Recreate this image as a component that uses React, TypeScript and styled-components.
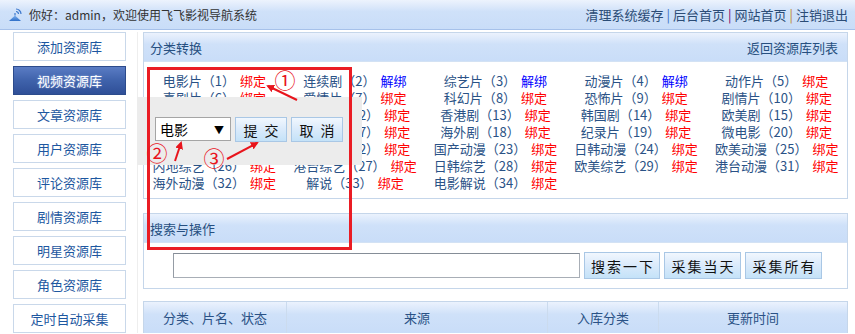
import React from "react";
import styled, { createGlobalStyle } from "styled-components";

const GlobalStyle = createGlobalStyle`
  html, body { margin: 0; padding: 0; background: #fff; }
  body { font-family: "Noto Sans CJK SC", "Noto Sans", sans-serif; }
  * { box-sizing: border-box; }
`;

const Page = styled.div`
  position: relative;
  width: 855px;
  height: 334px;
  overflow: hidden;
  background: #fff;
`;

const TopBar = styled.header`
  height: 30px;
  border-bottom: 1px solid #a6c1ea;
  background: linear-gradient(to bottom, #edf3fd 0%, #cfe1f9 40%, #c9ddf8 100%);
  display: flex;
  align-items: center;
  justify-content: space-between;
  padding: 0 7px 0 8px;
`;

const Greeting = styled.div`
  display: flex;
  align-items: center;
  gap: 7px;
  font-size: 12px;
  line-height: 16px;
  color: #333;
`;

const TopLinks = styled.nav`
  font-size: 13px;
  line-height: 16px;
  color: #2b4c76;
  white-space: nowrap;
`;

const Sep = styled.span<{ $c: string }>`
  color: ${(p) => p.$c};
  margin: 0 3px;
`;

const Body = styled.div`
  display: flex;
  padding-top: 2px;
`;

const Sidebar = styled.aside`
  width: 137px;
  padding-left: 13px;
  display: flex;
  flex-direction: column;
  gap: 5px;
`;

const SideButton = styled.div<{ $active?: boolean }>`
  width: 113px;
  height: 29px;
  display: flex;
  align-items: center;
  justify-content: center;
  font-size: 13px;
  border: 1px solid ${(p) => (p.$active ? "#2c4b8c" : "#c9d8ea")};
  background: ${(p) =>
    p.$active ? "linear-gradient(to bottom, #5a7cc4 0%, #3f62ab 50%, #2f4f97 100%)" : "#fff"};
  color: ${(p) => (p.$active ? "#fff" : "#1d57a0")};
  text-shadow: ${(p) => (p.$active ? "0 0 2px rgba(200,220,255,0.7)" : "none")};
`;

const Main = styled.main`
  width: 718px;
  border-left: 1px solid #eeeeee;
  padding: 0 7px 0 5px;
  display: flex;
  flex-direction: column;
`;

const Panel = styled.section<{ $mt?: number }>`
  width: 705px;
  border: 1px solid #c5d6ea;
  margin-top: ${(p) => p.$mt ?? 0}px;
  background: #fff;
`;

const PanelHeader = styled.div`
  height: 29px;
  border-bottom: 1px solid #d3e2f4;
  background: linear-gradient(to bottom, #ebf2fd 0%, #cfe1f9 40%, #c9ddf8 100%);
  display: flex;
  align-items: center;
  justify-content: space-between;
  padding: 0 9px 0 6px;
  font-size: 13px;
  color: #264f80;
`;

const CatGrid = styled.ul`
  list-style: none;
  margin: 0;
  padding: 10px 0 7px;
  display: grid;
  grid-template-columns: repeat(5, 1fr);
  font-size: 13px;
  line-height: 17px;
`;

const CatItem = styled.li`
  text-align: center;
  white-space: nowrap;
  color: #2a5286;
`;

const Action = styled.span<{ $unbind?: boolean }>`
  margin-left: 5px;
  color: ${(p) => (p.$unbind ? "#0000ff" : "#ff0000")};
`;

const SearchRow = styled.div`
  display: flex;
  align-items: center;
  gap: 4px;
  padding: 9px 0 9px 29px;
`;

const SearchInput = styled.input`
  width: 407px;
  height: 25px;
  border: 1px solid #a8aeb6;
  border-top-color: #858d97;
  border-left-color: #959ca5;
  outline: none;
  padding: 0 4px;
  font-size: 13px;
`;

const BlueButton = styled.button<{ $w: number; $h: number; $ls?: number }>`
  width: ${(p) => p.$w}px;
  height: ${(p) => p.$h}px;
  padding: 0;
  border: 1px solid #a9c7e5;
  background: linear-gradient(to bottom, #f1f7fe 0%, #dcebfb 45%, #c4e2f8 100%);
  font-family: "Noto Sans CJK SC", "Noto Sans", sans-serif;
  font-size: 14px;
  letter-spacing: ${(p) => p.$ls ?? 2}px;
  text-indent: ${(p) => p.$ls ?? 2}px;
  color: #111;
  cursor: pointer;
`;

const Table = styled.div`
  width: 705px;
  margin-top: 12px;
  border: 1px solid #c5d6ea;
  border-bottom: none;
  display: grid;
  grid-template-columns: 142px 261px 111px 1fr;
`;

const Th = styled.div<{ $first?: boolean }>`
  height: 31px;
  display: flex;
  align-items: center;
  justify-content: center;
  font-size: 13px;
  color: #2a5286;
  border-left: ${(p) => (p.$first ? "none" : "1px solid #cbdbee")};
  background: linear-gradient(to bottom, #ebf2fd 0%, #cfe1f9 40%, #c9ddf8 100%);
`;

/* ---- overlays ---- */

const Popup = styled.div`
  position: absolute;
  left: 137px;
  top: 97px;
  width: 225px;
  height: 68px;
  background: #ececec;
  display: flex;
  align-items: flex-start;
  gap: 4px;
  padding: 20px 0 0 18px;
`;

const SelectBox = styled.div`
  width: 76px;
  height: 24px;
  background: #fff;
  border: 1px solid #a5a5a5;
  display: flex;
  align-items: center;
  justify-content: space-between;
  padding: 0 6px 0 4px;
  font-size: 14px;
  color: #000;
`;

const Caret = styled.span`
  font-size: 10px;
  color: #000;
`;

const RedFrame = styled.div`
  position: absolute;
  left: 147px;
  top: 67px;
  width: 205px;
  height: 183px;
  border: 3px solid #ea1c24;
  pointer-events: none;
`;

const Marker = styled.span`
  position: absolute;
  transform: translate(-50%, -50%);
  font-family: "Noto Sans CJK SC", sans-serif;
  font-size: 21px;
  line-height: 1;
  color: #e8141c;
  pointer-events: none;
`;

const ArrowLayer = styled.svg`
  position: absolute;
  left: 0;
  top: 0;
  pointer-events: none;
`;

type Cat = { name: string; n: number; unbind?: boolean };

const cats: Cat[] = [
  { name: "电影片", n: 1 },
  { name: "连续剧", n: 2, unbind: true },
  { name: "综艺片", n: 3, unbind: true },
  { name: "动漫片", n: 4, unbind: true },
  { name: "动作片", n: 5 },
  { name: "喜剧片", n: 6 },
  { name: "爱情片", n: 7 },
  { name: "科幻片", n: 8 },
  { name: "恐怖片", n: 9 },
  { name: "剧情片", n: 10 },
  { name: "战争片", n: 11 },
  { name: "国产剧", n: 12 },
  { name: "香港剧", n: 13 },
  { name: "韩国剧", n: 14 },
  { name: "欧美剧", n: 15 },
  { name: "台湾剧", n: 16 },
  { name: "日本剧", n: 17 },
  { name: "海外剧", n: 18 },
  { name: "纪录片", n: 19 },
  { name: "微电影", n: 20 },
  { name: "伦理片", n: 21 },
  { name: "内地剧", n: 22 },
  { name: "国产动漫", n: 23 },
  { name: "日韩动漫", n: 24 },
  { name: "欧美动漫", n: 25 },
  { name: "内地综艺", n: 26 },
  { name: "港台综艺", n: 27 },
  { name: "日韩综艺", n: 28 },
  { name: "欧美综艺", n: 29 },
  { name: "港台动漫", n: 31 },
  { name: "海外动漫", n: 32 },
  { name: "解说", n: 33 },
  { name: "电影解说", n: 34 },
];

const sideItems = [
  "添加资源库",
  "视频资源库",
  "文章资源库",
  "用户资源库",
  "评论资源库",
  "剧情资源库",
  "明星资源库",
  "角色资源库",
  "定时自动采集",
];

const SignalIcon = () => (
  <svg width="14" height="15" viewBox="0 0 14 15">
    <defs>
      <linearGradient id="sg" x1="0" y1="0" x2="0" y2="1">
        <stop offset="0" stopColor="#7fb2ef" />
        <stop offset="1" stopColor="#2f6fc8" />
      </linearGradient>
    </defs>
    <path d="M1 14 L7 8.5 L13 14 Z" fill="url(#sg)" />
    <path d="M7 8.5 L7 6" stroke="#3d78cc" strokeWidth="1.2" />
    <path d="M8 4.5 A2.5 2.5 0 0 1 10.5 7" stroke="#3d78cc" strokeWidth="1.2" fill="none" />
    <path d="M8 2 A5 5 0 0 1 13 7" stroke="#3d78cc" strokeWidth="1.2" fill="none" />
  </svg>
);

export default function App() {
  return (
    <Page>
      <GlobalStyle />
      <TopBar>
        <Greeting>
          <SignalIcon />
          <span>你好：admin，欢迎使用飞飞影视导航系统</span>
        </Greeting>
        <TopLinks>
          清理系统缓存<Sep $c="#3c6fc4">|</Sep>后台首页<Sep $c="#800060">|</Sep>网站首页
          <Sep $c="#c28a2c">|</Sep>注销退出
        </TopLinks>
      </TopBar>
      <Body>
        <Sidebar>
          {sideItems.map((s, i) => (
            <SideButton key={s} $active={i === 1}>
              {s}
            </SideButton>
          ))}
        </Sidebar>
        <Main>
          <Panel>
            <PanelHeader>
              <span>分类转换</span>
              <span>返回资源库列表</span>
            </PanelHeader>
            <CatGrid>
              {cats.map((c) => (
                <CatItem key={c.n}>
                  {c.name}（{c.n}）
                  <Action $unbind={c.unbind}>{c.unbind ? "解绑" : "绑定"}</Action>
                </CatItem>
              ))}
            </CatGrid>
          </Panel>
          <Panel $mt={14}>
            <PanelHeader>
              <span>搜索与操作</span>
            </PanelHeader>
            <SearchRow>
              <SearchInput />
              <BlueButton $w={76} $h={27}>搜索一下</BlueButton>
              <BlueButton $w={77} $h={27}>采集当天</BlueButton>
              <BlueButton $w={77} $h={27}>采集所有</BlueButton>
            </SearchRow>
          </Panel>
          <Table>
            <Th $first>分类、片名、状态</Th>
            <Th>来源</Th>
            <Th>入库分类</Th>
            <Th>更新时间</Th>
          </Table>
        </Main>
      </Body>

      <Popup>
        <SelectBox>
          <span>电影</span>
          <Caret>▼</Caret>
        </SelectBox>
        <BlueButton $w={52} $h={25} $ls={7}>提交</BlueButton>
        <BlueButton $w={52} $h={25} $ls={7}>取消</BlueButton>
      </Popup>

      <RedFrame />
      <ArrowLayer width="855" height="334" viewBox="0 0 855 334">
        <defs>
          <marker id="ah" markerWidth="8" markerHeight="8" refX="6" refY="4" orient="auto" markerUnits="userSpaceOnUse">
            <path d="M0 0 L8 4 L0 8 Z" fill="#e8141c" />
          </marker>
        </defs>
        <line x1="297" y1="100" x2="268" y2="86" stroke="#e8141c" strokeWidth="2" markerEnd="url(#ah)" />
        <line x1="175" y1="161" x2="181" y2="143" stroke="#e8141c" strokeWidth="2" markerEnd="url(#ah)" />
        <line x1="227" y1="159" x2="257" y2="143" stroke="#e8141c" strokeWidth="2" markerEnd="url(#ah)" />
      </ArrowLayer>
      <Marker style={{ left: 285, top: 79 }}>①</Marker>
      <Marker style={{ left: 157, top: 152 }}>②</Marker>
      <Marker style={{ left: 214, top: 157 }}>③</Marker>
    </Page>
  );
}
